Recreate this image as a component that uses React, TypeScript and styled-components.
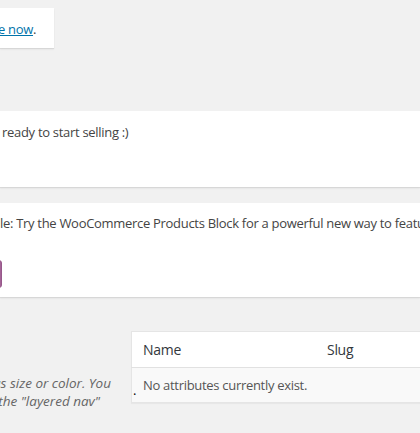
import React from "react";
import styled, { createGlobalStyle } from "styled-components";

const Global = createGlobalStyle`
  html, body {
    margin: 0;
    padding: 0;
    background: #f1f1f1;
    overflow: hidden;
  }
  body {
    font-family: "Open Sans", "Noto Sans", sans-serif;
    font-size: 13px;
    letter-spacing: -0.3px;
    color: #444;
    width: 420px;
    height: 433px;
  }
`;

const Page = styled.div`
  display: flex;
  flex-direction: column;
  padding-top: 8px;
`;

const Notice = styled.div<{ $width?: string; $height: number; $gap: number }>`
  box-sizing: border-box;
  background: #fff;
  box-shadow: 0 1px 1px rgba(0, 0, 0, 0.08), 0 2px 2px rgba(0, 0, 0, 0.03);
  width: ${(p) => p.$width ?? "100%"};
  height: ${(p) => p.$height}px;
  margin-bottom: ${(p) => p.$gap}px;
  display: flex;
  flex-direction: column;
  overflow: hidden;
  white-space: nowrap;
`;

const NoticeText = styled.p<{ $top: number; $shift?: number }>`
  margin: ${(p) => p.$top}px 0 0 ${(p) => p.$shift ?? 0}px;
  line-height: 20px;
`;

const Link = styled.a`
  color: #0073aa;
  text-decoration: underline;
`;

const ButtonEdge = styled.span`
  display: block;
  margin: 27px 0 0 -60px;
  width: 62px;
  height: 28px;
  flex-shrink: 0;
  box-sizing: border-box;
  background: #a46497;
  border: 1px solid #96588a;
  border-radius: 3px;
`;

const Section = styled.div`
  display: flex;
  align-items: flex-start;
  margin-top: 34px;
`;

const Description = styled.div`
  width: 131px;
  flex-shrink: 0;
  padding-top: 43px;
  font-style: italic;
  font-size: 13.5px;
  letter-spacing: 0px;
  color: #666;
  line-height: 18px;
  white-space: nowrap;
  overflow: hidden;
  display: flex;
  flex-direction: column;
  align-items: flex-end;
`;

const Line = styled.span<{ $end: number }>`
  margin-right: ${(p) => 131 - p.$end}px;
`;

const Table = styled.table`
  flex: 1;
  border-collapse: collapse;
  border: 1px solid #e5e5e5;
  box-shadow: 0 1px 1px rgba(0, 0, 0, 0.04);
  background: #fff;
  margin-right: -40px;
  text-align: left;
`;

const Th = styled.th<{ $w?: number }>`
  font-weight: 400;
  color: #32373c;
  font-size: 14px;
  height: 35px;
  padding: 0 11px;
  width: ${(p) => (p.$w ? `${p.$w}px` : "auto")};
  border-bottom: 1px solid #e1e1e1;
`;

const Td = styled.td`
  background: #f9f9f9;
  color: #555;
  height: 34px;
  padding: 0 11px;
  position: relative;
`;

const Dot = styled.span`
  position: absolute;
  left: 1px;
  top: 13px;
  color: #000;
`;

const Footer = styled.div`
  margin: 27px 0 0 238px;
  height: 20px;
  background: #fff;
`;

export default function App() {
  return (
    <>
      <Global />
      <Page>
        <Notice $width="54px" $height={40} $gap={63}>
          <NoticeText $top={11} $shift={-2}>
            <Link>e now</Link>.
          </NoticeText>
        </Notice>
        <Notice $height={76} $gap={16}>
          <NoticeText $top={11} $shift={2}>
            ready to start selling :)
          </NoticeText>
        </Notice>
        <Notice $height={94} $gap={0}>
          <NoticeText $top={10} $shift={0}>
            le: Try the WooCommerce Products Block for a powerful new way to feature products
          </NoticeText>
          <ButtonEdge />
        </Notice>
        <Section>
          <Description>
            <Line $end={111}>such as size or color. You</Line>
            <Line $end={100}>use in the "layered nav"</Line>
          </Description>
          <Table>
            <thead>
              <tr>
                <Th $w={162}>Name</Th>
                <Th>Slug</Th>
              </tr>
            </thead>
            <tbody>
              <tr>
                <Td colSpan={2}>
                  <Dot>.</Dot>
                  No attributes currently exist.
                </Td>
              </tr>
            </tbody>
          </Table>
        </Section>
        <Footer />
      </Page>
    </>
  );
}
